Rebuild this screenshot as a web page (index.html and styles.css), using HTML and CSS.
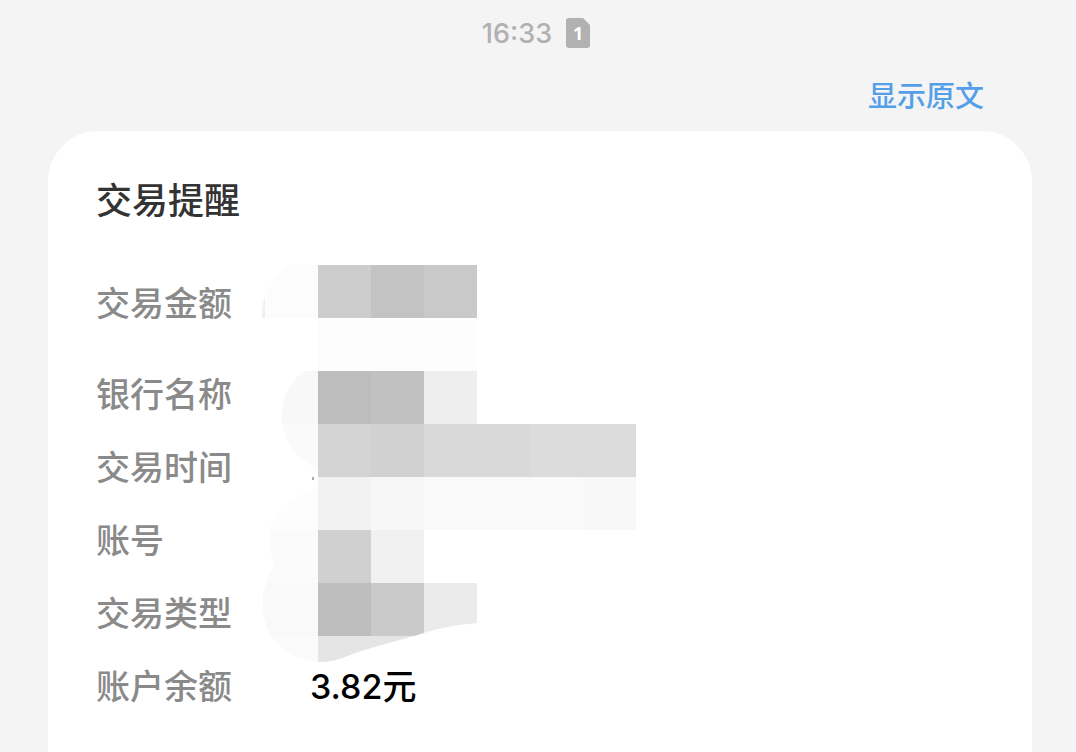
FILE: index.html
```html
<!DOCTYPE html>
<html lang="zh-CN">
<head>
    <meta charset="UTF-8">
    <meta name="viewport" content="width=device-width, initial-scale=1.0">
    <title>交易提醒</title>
    <link rel="stylesheet" href="styles.css">
</head>
<body>
    <header class="message-header">
        <time class="message-time">16:33</time>
        <span class="sim-badge">
            <svg class="sim-shape" viewBox="0 0 24 30" aria-hidden="true">
                <path d="M3 0H17L24 7V27Q24 30 21 30H3Q0 30 0 27V3Q0 0 3 0Z" fill="#b1b1b1"/>
            </svg>
            <span class="sim-number">1</span>
        </span>
    </header>

    <nav class="message-actions">
        <a href="#" class="original-link">显示原文</a>
    </nav>

    <main class="card">
        <h1 class="card-title">交易提醒</h1>

        <div class="details">
            <dl class="detail-list">
                <div class="detail-row amount-row">
                    <dt>交易金额</dt>
                    <dd></dd>
                </div>
                <div class="detail-row">
                    <dt>银行名称</dt>
                    <dd></dd>
                </div>
                <div class="detail-row">
                    <dt>交易时间</dt>
                    <dd></dd>
                </div>
                <div class="detail-row">
                    <dt>账号</dt>
                    <dd></dd>
                </div>
                <div class="detail-row">
                    <dt>交易类型</dt>
                    <dd></dd>
                </div>
                <div class="detail-row">
                    <dt>账户余额</dt>
                    <dd>3.82元</dd>
                </div>
            </dl>

            <!-- mosaic over the private values, 53px blocks -->
            <svg class="mosaic" viewBox="0 0 376 400" aria-hidden="true">
                <path d="M27 0H56V53H0Q1 20 27 0Z" fill="#fcfcfc"/>
                <path d="M0 53Q0 40 3 31V53Z" fill="#f0f0f0"/>
                <rect x="56" y="0" width="53" height="53" fill="#cdcdcd"/>
                <rect x="109" y="0" width="53" height="53" fill="#c3c3c3"/>
                <rect x="162" y="0" width="53" height="53" fill="#c9c9c9"/>
                <rect x="56" y="53" width="159" height="53" fill="#fdfdfd"/>

                <path d="M42 106H56V159H20Q17 126 42 106Z" fill="#f8f8f8"/>
                <rect x="56" y="106" width="53" height="53" fill="#bdbdbd"/>
                <rect x="109" y="106" width="53" height="53" fill="#c1c1c1"/>
                <rect x="162" y="106" width="53" height="53" fill="#eeeeee"/>

                <path d="M20 159H56V204Q26 190 20 159Z" fill="#fafafa"/>
                <rect x="56" y="159" width="53" height="53" fill="#d4d4d4"/>
                <rect x="109" y="159" width="53" height="53" fill="#d1d1d1"/>
                <rect x="162" y="159" width="106" height="53" fill="#d9d9d9"/>
                <rect x="268" y="159" width="106" height="53" fill="#dcdcdc"/>

                <rect x="50" y="212" width="2" height="3" fill="#aaaaaa"/>
                <path d="M56 222V265H8Q14 235 56 222Z" fill="#fdfdfd"/>
                <rect x="56" y="212" width="53" height="53" fill="#f2f2f2"/>
                <rect x="109" y="212" width="53" height="53" fill="#f7f7f7"/>
                <rect x="162" y="212" width="159" height="53" fill="#f9f9f9"/>
                <rect x="321" y="212" width="53" height="53" fill="#f8f8f8"/>

                <path d="M8 265H56V318H4Q7 309 12 302Q7 286 8 265Z" fill="#fbfbfb"/>
                <rect x="56" y="265" width="53" height="53" fill="#d0d0d0"/>
                <rect x="109" y="265" width="53" height="53" fill="#f1f1f1"/>

                <path d="M4 318H56V371H9Q-5 345 4 318Z" fill="#f9f9f9"/>
                <rect x="56" y="318" width="53" height="53" fill="#bdbdbd"/>
                <path d="M109 318H162V368L152 371H109Z" fill="#cacaca"/>
                <path d="M162 318H215V358Q182 361 162 368Z" fill="#ebebeb"/>

                <path d="M9 371H56V397Q25 394 9 371Z" fill="#fbfbfb"/>
                <path d="M56 371H152L109 383Q95 387 83 392Q72 397 56 397Z" fill="#e5e5e5"/>
            </svg>
        </div>
    </main>
</body>
</html>
```
FILE: styles.css
```css
* {
    margin: 0;
    padding: 0;
    box-sizing: border-box;
}

body {
    display: flex;
    flex-direction: column;
    min-height: 100vh;
    padding: 0 44px 0 48px;
    background-color: #f4f4f4;
    font-family: Inter, "Noto Sans CJK SC", sans-serif;
}

.message-header {
    display: flex;
    justify-content: center;
    align-items: center;
    gap: 14px;
    height: 66px;
    padding-right: 8px;
    color: #b1b1b1;
}

.message-time {
    font-size: 27px;
    font-weight: 500;
}

.sim-badge {
    display: grid;
    place-items: center;
    width: 24px;
    height: 30px;
}

.sim-shape,
.sim-number {
    grid-area: 1 / 1;
}

.sim-shape {
    width: 24px;
    height: 30px;
}

.sim-number {
    color: #ffffff;
    font-family: "Open Sans", sans-serif;
    font-size: 18px;
    font-weight: 700;
    line-height: 30px;
}

.message-actions {
    display: flex;
    justify-content: flex-end;
    height: 65px;
    padding: 9px 48px 0 0;
}

.original-link {
    color: #559fe8;
    font-size: 29px;
    font-weight: 500;
    line-height: 44px;
    text-decoration: none;
}

.card {
    flex: 1;
    padding: 46px 48px 28px;
    border-radius: 50px 50px 0 0;
    background-color: #ffffff;
}

.card-title {
    margin-bottom: 40px;
    color: #333333;
    font-size: 36px;
    font-weight: 500;
    line-height: 48px;
}

.details {
    position: relative;
}

.detail-list {
    padding-top: 2px;
}

.detail-row {
    display: flex;
    gap: 78px;
    font-size: 34px;
    font-weight: 500;
    line-height: 73px;
}

.amount-row {
    margin-bottom: 18px;
}

.detail-row dt {
    width: 136px;
    color: #8a8a8a;
}

.detail-row dd {
    color: #000000;
}

.mosaic {
    position: absolute;
    top: 0;
    left: 166px;
    width: 376px;
    height: 400px;
}
```
